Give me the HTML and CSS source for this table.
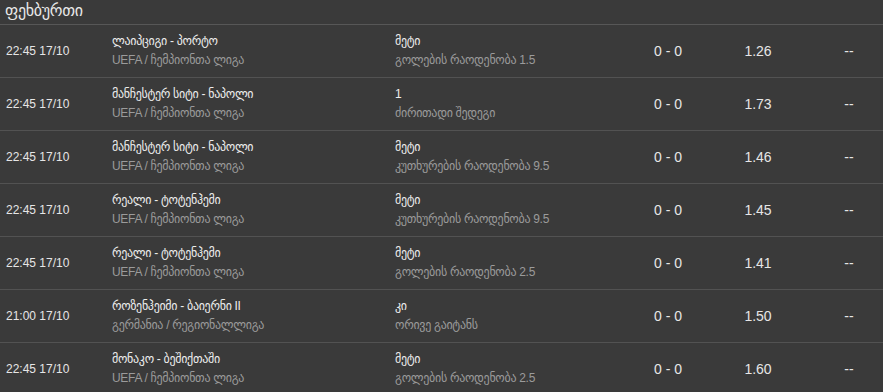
FILE: index.html
```html
<!DOCTYPE html>
<html lang="ka">
<head>
<meta charset="utf-8">
<link rel="stylesheet" href="styles.css">
</head>
<body>
<div class="panel">
  <div class="head">ფეხბურთი</div>
  <div class="row">
    <div class="time">22:45 17/10</div>
    <div class="two"><div class="pri">ლაიპციგი - პორტო</div><div class="sec">UEFA / ჩემპიონთა ლიგა</div></div>
    <div class="two"><div class="pri">მეტი</div><div class="sec">გოლების რაოდენობა 1.5</div></div>
    <div class="num">0 - 0</div>
    <div class="num">1.26</div>
    <div class="num">--</div>
  </div>
  <div class="row">
    <div class="time">22:45 17/10</div>
    <div class="two"><div class="pri">მანჩესტერ სიტი - ნაპოლი</div><div class="sec">UEFA / ჩემპიონთა ლიგა</div></div>
    <div class="two"><div class="pri">1</div><div class="sec">ძირითადი შედეგი</div></div>
    <div class="num">0 - 0</div>
    <div class="num">1.73</div>
    <div class="num">--</div>
  </div>
  <div class="row">
    <div class="time">22:45 17/10</div>
    <div class="two"><div class="pri">მანჩესტერ სიტი - ნაპოლი</div><div class="sec">UEFA / ჩემპიონთა ლიგა</div></div>
    <div class="two"><div class="pri">მეტი</div><div class="sec">კუთხურების რაოდენობა 9.5</div></div>
    <div class="num">0 - 0</div>
    <div class="num">1.46</div>
    <div class="num">--</div>
  </div>
  <div class="row">
    <div class="time">22:45 17/10</div>
    <div class="two"><div class="pri">რეალი - ტოტენჰემი</div><div class="sec">UEFA / ჩემპიონთა ლიგა</div></div>
    <div class="two"><div class="pri">მეტი</div><div class="sec">კუთხურების რაოდენობა 9.5</div></div>
    <div class="num">0 - 0</div>
    <div class="num">1.45</div>
    <div class="num">--</div>
  </div>
  <div class="row">
    <div class="time">22:45 17/10</div>
    <div class="two"><div class="pri">რეალი - ტოტენჰემი</div><div class="sec">UEFA / ჩემპიონთა ლიგა</div></div>
    <div class="two"><div class="pri">მეტი</div><div class="sec">გოლების რაოდენობა 2.5</div></div>
    <div class="num">0 - 0</div>
    <div class="num">1.41</div>
    <div class="num">--</div>
  </div>
  <div class="row">
    <div class="time">21:00 17/10</div>
    <div class="two"><div class="pri">როზენჰეიმი - ბაიერნი II</div><div class="sec">გერმანია / რეგიონალლიგა</div></div>
    <div class="two"><div class="pri">კი</div><div class="sec">ორივე გაიტანს</div></div>
    <div class="num">0 - 0</div>
    <div class="num">1.50</div>
    <div class="num">--</div>
  </div>
  <div class="row">
    <div class="time">22:45 17/10</div>
    <div class="two"><div class="pri">მონაკო - ბეშიქთაში</div><div class="sec">UEFA / ჩემპიონთა ლიგა</div></div>
    <div class="two"><div class="pri">მეტი</div><div class="sec">გოლების რაოდენობა 2.5</div></div>
    <div class="num">0 - 0</div>
    <div class="num">1.60</div>
    <div class="num">--</div>
  </div>
</div>
</body>
</html>
```
FILE: styles.css
```css
html, body {
  margin: 0;
  padding: 0;
  background: #3a3a3a;
}
body {
  font-family: "Liberation Sans", "DejaVu Sans", sans-serif;
  color: #e6e6e6;
  overflow: hidden;
}
.panel {
  display: flex;
  flex-direction: column;
}
.head {
  height: 24px;
  line-height: 22px;
  padding-left: 5px;
  font-size: 16px;
  letter-spacing: -0.3px;
  color: #e8e8e8;
  border-bottom: 1px solid #575757;
  box-sizing: content-box;
}
.row {
  display: grid;
  grid-template-columns: 106px 283px 240px 66px 114px 1fr;
  align-items: center;
  height: 52px;
  padding-left: 6px;
  border-bottom: 1px solid #525252;
}
.time {
  font-size: 12px;
}
.two {
  display: flex;
  flex-direction: column;
  line-height: 19px;
  font-size: 12px;
  letter-spacing: -0.3px;
}
.pri {
  color: #ededed;
}
.sec {
  color: #9b9b9b;
}
.num {
  text-align: center;
  font-size: 14px;
  color: #e6e6e6;
}
```
